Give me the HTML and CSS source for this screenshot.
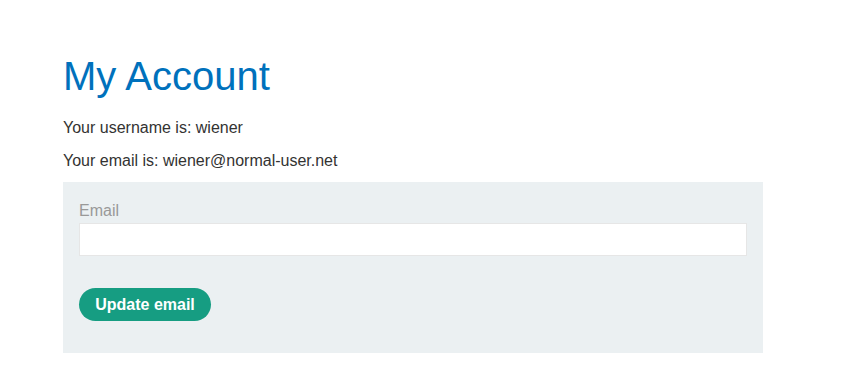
FILE: index.html
```html
<!DOCTYPE html>
<html lang="en">
<head>
  <meta charset="UTF-8">
  <title>My Account</title>
  <meta name="viewport" content="width=device-width, initial-scale=1.0">
  <link rel="stylesheet" href="styles.css">
</head>
<body>
  <div class="container">
    <h1>My Account</h1>
    <p>Your username is: wiener</p>
    <p class="last">Your email is: wiener@normal-user.net</p>

    <form class="login-form" id="change-email-form">
      <label for="email">Email</label>
      <input type="email" id="email" name="email">
      <button class="button" type="submit">Update email</button>
    </form>
  </div>
</body>
</html>
```

FILE: styles.css
```css
body {
  font-family: 'Liberation Sans', Arial, sans-serif;
  font-size: 16px;
  background: #fff;
  color: #333332;
  margin: 0;
  padding: 0;
}
.container {
  padding: 53px 0 0 63px;
  width: 700px;
}
h1 {
  color: #0071bc;
  font-size: 40px;
  font-weight: normal;
  line-height: 46px;
  margin: 0 0 18px;
}
p {
  margin: 0 0 11px;
  line-height: 22px;
}
p.last {
  margin-bottom: 10px;
}
.login-form {
  background: #ebf0f2;
  padding: 16px;
  margin-top: 0;
  display: flex;
  flex-direction: column;
  align-items: flex-start;
  height: 139px;
  box-sizing: content-box;
}
label {
  display: block;
  color: #999;
  line-height: 25px;
}
input {
  width: 100%;
  height: 33px;
  box-sizing: border-box;
  border: 1px solid #e6e6e6;
  background: #fff;
  padding: 0 8px;
  font-size: 16px;
  font-family: inherit;
  margin: 0;
}
input:focus {
  outline: none;
}
.button {
  margin-top: 32px;
  width: 132px;
  height: 33px;
  border: none;
  border-radius: 25px;
  background: #169d82;
  color: #fff;
  font-family: inherit;
  font-size: 16px;
  font-weight: bold;
  cursor: pointer;
  padding: 0;
}
.button:hover {
  background: #128a72;
}
```
